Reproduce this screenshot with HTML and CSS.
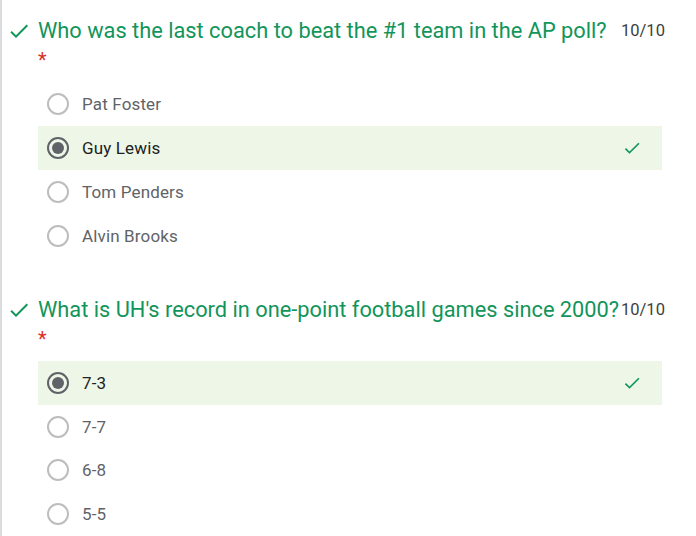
FILE: index.html
```html
<!DOCTYPE html>
<html>
<head>
<meta charset="utf-8">
<link rel="stylesheet" href="styles.css">
</head>
<body>
<div class="page">
  <div class="question">
    <div class="q-head">
      <svg class="q-check" viewBox="0 0 24 24" width="24" height="24"><path d="M9 16.17L4.83 12l-1.42 1.41L9 19 21 7l-1.41-1.41z" fill="#12955a"/></svg>
      <div class="q-title">Who was the last coach to beat the #1 team in the AP poll?</div>
      <div class="q-score">10/10</div>
    </div>
    <div class="req">*</div>
    <div class="options">
      <div class="opt"><span class="radio"></span><span class="label">Pat Foster</span></div>
      <div class="opt correct"><span class="radio on"></span><span class="label">Guy Lewis</span><svg class="a-check" viewBox="0 0 24 24" width="20" height="20"><path d="M9 16.17L4.83 12l-1.42 1.41L9 19 21 7l-1.41-1.41z" fill="#12955a"/></svg></div>
      <div class="opt"><span class="radio"></span><span class="label">Tom Penders</span></div>
      <div class="opt"><span class="radio"></span><span class="label">Alvin Brooks</span></div>
    </div>
  </div>
  <div class="question">
    <div class="q-head">
      <svg class="q-check" viewBox="0 0 24 24" width="24" height="24"><path d="M9 16.17L4.83 12l-1.42 1.41L9 19 21 7l-1.41-1.41z" fill="#12955a"/></svg>
      <div class="q-title">What is UH's record in one-point football games since 2000?</div>
      <div class="q-score">10/10</div>
    </div>
    <div class="req">*</div>
    <div class="options">
      <div class="opt correct"><span class="radio on"></span><span class="label">7-3</span><svg class="a-check" viewBox="0 0 24 24" width="20" height="20"><path d="M9 16.17L4.83 12l-1.42 1.41L9 19 21 7l-1.41-1.41z" fill="#12955a"/></svg></div>
      <div class="opt"><span class="radio"></span><span class="label">7-7</span></div>
      <div class="opt"><span class="radio"></span><span class="label">6-8</span></div>
      <div class="opt"><span class="radio"></span><span class="label">5-5</span></div>
    </div>
  </div>
</div>
</body>
</html>
```
FILE: styles.css
```css
html, body {
  margin: 0;
  padding: 0;
  background: #fff;
}
body {
  font-family: Roboto, "Liberation Sans", sans-serif;
  width: 696px;
  height: 536px;
  overflow: hidden;
}
.page {
  border-left: 2px solid #dadce0;
  height: 536px;
  box-sizing: border-box;
  padding: 17px 0 0 0;
  overflow: hidden;
}
.question + .question {
  margin-top: 38px;
}
.q-head {
  display: flex;
  align-items: flex-start;
  height: 28px;
}
.q-check {
  margin: 2px 0 0 5px;
  flex: none;
}
.q-title {
  flex: 1;
  margin-left: 7px;
  font-size: 21.8px;
  line-height: 28px;
  color: #12955a;
  white-space: nowrap;
}
.q-score {
  flex: none;
  width: 75px;
  font-size: 16.5px;
  line-height: 28px;
  color: #3c4043;
}
.req {
  margin-left: 36px;
  color: #d93025;
  font-size: 20px;
  line-height: 24px;
  height: 23px;
  padding-top: 3px;
  margin-bottom: 11px;
}
.options {
  display: flex;
  flex-direction: column;
  margin-left: 36px;
  width: 624px;
}
.opt {
  display: flex;
  align-items: center;
  height: 44px;
  padding-left: 9px;
  box-sizing: border-box;
}
.question + .question .opt {
  height: 43.7px;
}
.opt.correct {
  background: #eef7e7;
}
.radio {
  width: 22px;
  height: 22px;
  box-sizing: border-box;
  border: 2px solid #bdbdbd;
  border-radius: 50%;
  flex: none;
  display: flex;
  align-items: center;
  justify-content: center;
}
.radio.on {
  border-color: #5f6368;
}
.radio.on::after {
  content: "";
  width: 12px;
  height: 12px;
  border-radius: 50%;
  background: #5f6368;
}
.label {
  margin-left: 13px;
  font-size: 17px;
  letter-spacing: 0.15px;
  color: #5f6368;
  flex: 1;
}
.correct .label {
  color: #202124;
}
.a-check {
  flex: none;
  margin-right: 20px;
}
```
